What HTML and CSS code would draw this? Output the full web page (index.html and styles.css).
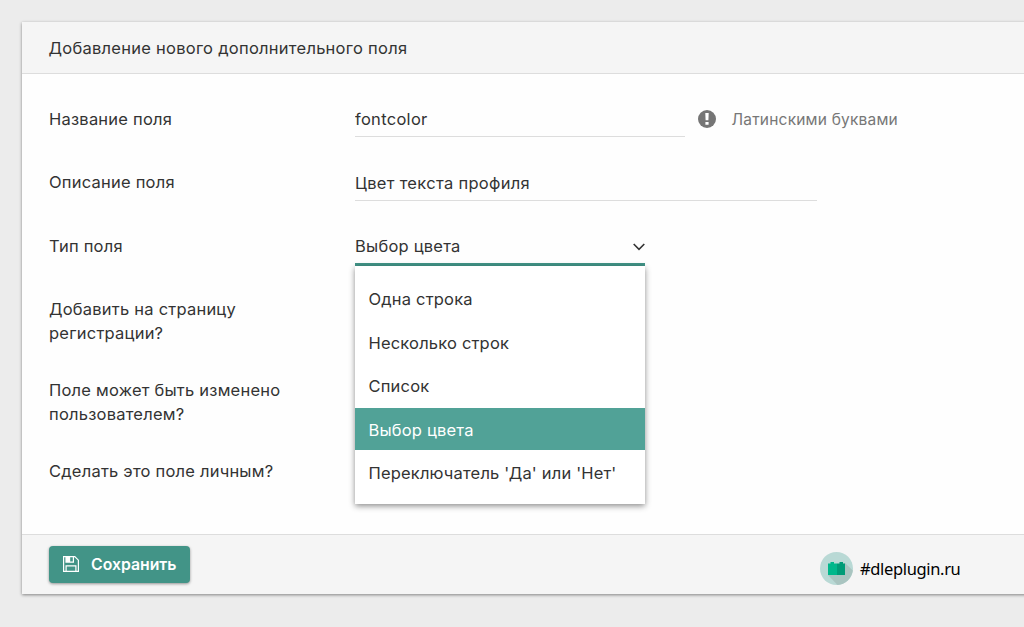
FILE: index.html
```html
<!DOCTYPE html>
<html lang="ru">
<head>
    <meta charset="UTF-8" />
    <title>Дополнительные поля</title>
    <link rel="stylesheet" href="styles.css">
</head>
<body>
    <form class="panel">
        <div class="panel-heading">Добавление нового дополнительного поля</div>

        <div class="panel-body">
            <div class="form-group">
                <label class="control-label" for="name">Название поля</label>
                <input class="form-control name-input" type="text" id="name" value="fontcolor">
                <svg class="help-icon" viewBox="0 0 18 18">
                    <circle cx="9" cy="9" r="9" fill="#757575"/>
                    <path d="M7.3 3h3.4l-.3 7.3H7.6zM7.4 12h3.2v2.8H7.4z" fill="#fff"/>
                </svg>
                <span class="help-text">Латинскими буквами</span>
            </div>
            <div class="form-group">
                <label class="control-label" for="description">Описание поля</label>
                <input class="form-control description-input" type="text" id="description" value="Цвет текста профиля">
            </div>
            <div class="form-group">
                <div class="control-label">Тип поля</div>
                <div class="select">
                    <div class="select-button">
                        <span>Выбор цвета</span>
                        <svg class="caret" viewBox="0 0 12 8">
                            <path d="M.7 1 6 6.3 11.3 1" fill="none" stroke="#333" stroke-width="1.6"/>
                        </svg>
                    </div>
                    <ul class="dropdown">
                        <li>Одна строка</li>
                        <li>Несколько строк</li>
                        <li>Список</li>
                        <li class="selected">Выбор цвета</li>
                        <li>Переключатель 'Да' или 'Нет'</li>
                    </ul>
                </div>
            </div>
            <div class="form-group">
                <div class="control-label">Добавить на страницу регистрации?</div>
            </div>
            <div class="form-group">
                <div class="control-label">Поле может быть изменено пользователем?</div>
            </div>
            <div class="form-group">
                <div class="control-label">Сделать это поле личным?</div>
            </div>
        </div>

        <div class="panel-footer">
            <button type="button" class="btn-save">
                <svg class="save-icon" viewBox="0 0 16 16">
                    <path d="M.6.6h11.2l3.6 3.6v11.2H.6zM3 .6v5.6h7.4V.6M3.1 15.4V9.8h9.8v5.6" fill="none" stroke="#fff" stroke-width="1.2"/>
                    <path d="M3 1h4.2v5H3z" fill="#fff"/>
                </svg>
                <span>Сохранить</span>
            </button>
            <div class="brand">
                <svg class="brand-logo" viewBox="0 0 33 33">
                    <circle cx="16.5" cy="16.5" r="16.5" fill="#b9d9d5"/>
                    <path d="M8 23 17.5 32.9A16.5 16.5 0 0 0 32.8 18.5L25 11z" fill="#a9c4c0"/>
                    <path d="M8 11.5h2.5V10h3.500v1.500H17V23H8z" fill="#00b78b"/>
                    <path d="M17 11.5h2.500V10H23v1.500h2V23h-8z" fill="#009b77"/>
                </svg>
                <span>#dleplugin.ru</span>
            </div>
        </div>
    </form>
</body>
</html>
```

FILE: styles.css
```css
* {
    box-sizing: border-box;
}

body {
    margin: 0;
    padding: 22px 0 0 22px;
    background-color: #ececec;
    font-family: Inter, "Liberation Sans", sans-serif;
    font-size: 16.5px;
    line-height: 24px;
    letter-spacing: 0.22px;
    color: #333;
    height: 627px;
    overflow: hidden;
}

.panel {
    width: 1040px;
    height: 572px;
    display: flex;
    flex-direction: column;
    background-color: #fefefe;
    box-shadow: 0 1px 3px rgba(0,0,0,0.45);
}

.panel-heading {
    height: 52px;
    padding: 14px 26.5px;
    background-color: #f5f5f5;
    border-bottom: 1px solid #ddd;
    letter-spacing: 0.26px;
}

.panel-body {
    flex: 1;
    padding: 27px 27px 0;
}

/* Строки формы */
.form-group {
    display: flex;
    align-items: flex-start;
    min-height: 36.8px;
    margin-bottom: 26.6px;
}

.control-label {
    width: 256px;
    margin-right: 50px;
    padding-top: 6px;
}

.form-control {
    height: 36px;
    padding: 1px 0 0;
    border: 0;
    border-bottom: 1px solid #ddd;
    background: transparent;
    font: inherit;
    letter-spacing: 0.3px;
    color: inherit;
}

.name-input {
    width: 330px;
}

.description-input {
    width: 462px;
    height: 37px;
}

.help-icon {
    width: 18px;
    height: 18px;
    margin: 9px 16px 0 12.5px;
}

.help-text {
    padding-top: 7px;
    font-size: 15.5px;
    letter-spacing: 0.2px;
    color: #777;
}

/* Выпадающий список */
.select {
    position: relative;
    width: 290px;
    height: 36px;
}

.select-button {
    display: flex;
    justify-content: space-between;
    height: 38px;
    padding-top: 6px;
    border-bottom: 3px solid #429487;
}

.caret {
    width: 12px;
    height: 8px;
    margin-top: 9px;
}

.dropdown {
    position: absolute;
    top: 38px;
    left: 0;
    width: 290px;
    height: 238px;
    margin: 0;
    padding: 11px 0 0;
    list-style: none;
    background-color: #fff;
    box-shadow: 0 2px 6px rgba(0,0,0,0.45);
}

.dropdown li {
    height: 42px;
    margin-bottom: 1.6px;
    padding: 10px 13.5px 8px;
    letter-spacing: 0.18px;
}

.dropdown .selected {
    background-color: #51a297;
    color: #fff;
}

/* Нижняя панель */
.panel-footer {
    display: flex;
    justify-content: space-between;
    height: 60px;
    padding: 11px 99.5px 0 27px;
    background-color: #f5f5f5;
    border-top: 1px solid #ddd;
}

.btn-save {
    display: flex;
    align-items: center;
    width: 141px;
    height: 37px;
    padding: 0 0 0 14px;
    border: 0;
    border-radius: 4px;
    background-color: #429487;
    box-shadow: 0 1px 3px rgba(0,0,0,0.4);
    font: inherit;
    font-size: 15.8px;
    font-weight: 600;
    color: #fff;
}

.save-icon {
    width: 16px;
    height: 16px;
    margin: 0 12px 1px 0;
    flex-shrink: 0;
}

.brand {
    display: flex;
    align-items: center;
    gap: 7.5px;
    width: 143px;
    height: 33px;
    margin-top: 6px;
    font-family: "Noto Sans", sans-serif;
    font-size: 16.5px;
    letter-spacing: -0.35px;
    color: #000;
}

.brand-logo {
    width: 33px;
    height: 33px;
    flex-shrink: 0;
}
```
